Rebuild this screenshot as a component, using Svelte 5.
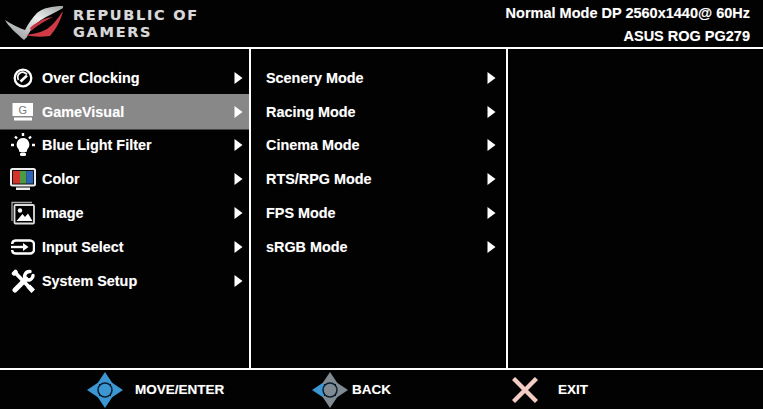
<script>
	const mainItems = ['Over Clocking', 'GameVisual', 'Blue Light Filter', 'Color', 'Image', 'Input Select', 'System Setup'];
	const modes = ['Scenery Mode', 'Racing Mode', 'Cinema Mode', 'RTS/RPG Mode', 'FPS Mode', 'sRGB Mode'];
</script>

{#snippet arrow()}
	<svg class="arrow" width="9" height="12" viewBox="0 0 9 12"><path d="M0.500 0 L8.500 6 L0.500 12 Z" fill="#fff" /></svg>
{/snippet}

{#snippet dpad(left, rest)}
	<svg width="36" height="36" viewBox="0 0 36 36">
		<path d="M0 18 L12 10 L12 26 Z" fill={left} />
		<path d="M18 0 L10 12 L26 12 Z" fill={rest} />
		<path d="M36 18 L24 10 L24 26 Z" fill={rest} />
		<path d="M18 36 L10 24 L26 24 Z" fill={rest} />
		<circle cx="18" cy="18" r="7" fill={rest} stroke="#0a1e30" stroke-width="1.500" />
	</svg>
{/snippet}

<div class="osd">
	<header>
		<div class="brand">
			<svg width="66" height="47" viewBox="0 0 66 47">
				<defs>
					<linearGradient id="blade" x1="0" y1="1" x2="1" y2="0">
						<stop offset="0" stop-color="#8a8e8e" />
						<stop offset="0.600" stop-color="#eceeee" />
						<stop offset="1" stop-color="#a0a4a4" />
					</linearGradient>
				</defs>
				<path d="M63 6 C52 6 43 8 37 13 C32 18 28 24 25 30 C19 28 11 24 5 20 C8 26 16 33 24 40 L27 37 C31 28 38 21 46 17 C52 14 58 11 63 8 Z" fill="url(#blade)" />
				<path d="M63 11 C61 20 56 29 50 36 C42 37 33 37 26 35 C34 34 42 32 47 29 C53 25 58 18 63 11 Z" fill="#d03a44" />
				<path d="M30 28 C36 22 44 18 53 17 C45 21 38 25 31 31 Z" fill="#c23640" />
			</svg>
			<div class="wordmark"><span>REPUBLIC OF</span><span>GAMERS</span></div>
		</div>
		<div class="status">
			<span>Normal Mode DP 2560x1440@ 60Hz</span>
			<span>ASUS ROG PG279</span>
		</div>
	</header>

	<main>
		<ul class="col first">
			{#each mainItems as item, i}
				<li class:active={i === 1}>
					<span class="icon">
						{#if i === 0}
							<svg width="20" height="20" viewBox="0 0 20 20" fill="none" stroke="#fff">
								<circle cx="10" cy="10" r="8.300" stroke-width="2.300" />
								<path d="M5.500 12 A5 5 0 0 1 14 6.500" stroke-width="1.700" />
								<path d="M7.500 13.500 L14 7.500" stroke-width="2.600" />
							</svg>
						{:else if i === 1}
							<svg width="22" height="20" viewBox="0 0 22 20">
								<rect x="0.500" y="1" width="20.500" height="13" fill="#fff" />
								<rect x="2" y="15.500" width="18" height="3" fill="#fff" />
								<text class="g" x="10.700" y="12" text-anchor="middle">G</text>
							</svg>
						{:else if i === 2}
							<svg width="26" height="24" viewBox="0 0 26 24" fill="#fff">
								<path d="M13 5 A6.500 6.500 0 0 1 17.500 16 L16.500 19 L9.500 19 L8.500 16 A6.500 6.500 0 0 1 13 5 Z" />
								<rect x="10" y="19.500" width="6" height="3.500" rx="1.500" />
								<path d="M13 0 V3 M5 3.500 L7 5.500 M21 3.500 L19 5.500 M1 12 H4 M22 12 H25" stroke="#fff" stroke-width="2.400" />
							</svg>
						{:else if i === 3}
							<svg width="26" height="23" viewBox="0 0 26 23">
								<rect x="1" y="1" width="24" height="16.500" rx="1.500" fill="#111" stroke="#eee" stroke-width="2" />
								<rect x="3" y="3" width="7" height="12.500" fill="#d6322c" />
								<rect x="10" y="3" width="6.500" height="12.500" fill="#4d9a45" />
								<rect x="16.500" y="3" width="6.500" height="12.500" fill="#2c62b8" />
								<rect x="6" y="19.500" width="14" height="2.500" fill="#eee" />
							</svg>
						{:else if i === 4}
							<svg width="24" height="24" viewBox="0 0 24 24" fill="none">
								<path d="M1 20 V1.500 H21" stroke="#aaa" stroke-width="1.300" />
								<rect x="3.500" y="4" width="19.500" height="18.500" rx="1" stroke="#ddd" stroke-width="1.800" />
								<circle cx="9" cy="9.500" r="2.200" fill="#fff" />
								<path d="M5.500 20 L11.500 13 L14 16 L17 12.500 L21.500 20 Z" fill="#fff" />
							</svg>
						{:else if i === 5}
							<svg width="24" height="16" viewBox="0 0 24 16" fill="none" stroke="#fff" stroke-width="2.400">
								<path d="M1.200 5 A3.500 3.500 0 0 1 4.500 1.500 H19 A4 4 0 0 1 23 5.500 V10.500 A4 4 0 0 1 19 14.500 H4.500 A3.500 3.500 0 0 1 1.200 11" />
								<path d="M0 8 H15" />
								<path d="M12 4 L17.500 8 L12 12 Z" fill="#fff" stroke="none" />
							</svg>
						{:else}
							<svg width="24" height="24" viewBox="0 0 24 24" fill="none" stroke="#fff" stroke-linecap="round">
								<path d="M4 3.500 L20 20" stroke-width="3.800" />
								<path d="M16.500 18.500 L20.500 23 L23 20.500 L19 16.500 Z" fill="#fff" stroke-width="1.500" />
								<path d="M3 4.500 L4.500 3" stroke-width="4.500" />
								<path d="M4 21 L15 10" stroke-width="5" />
								<path d="M14.500 10 A4.800 4.800 0 0 1 19 2.500 M15 10.500 A4.800 4.800 0 0 0 22 6.500" stroke-width="3.400" />
							</svg>
						{/if}
					</span>
					<span class="label">{item}</span>
					{@render arrow()}
				</li>
			{/each}
		</ul>
		<ul class="col second">
			{#each modes as mode}
				<li><span class="label">{mode}</span>{@render arrow()}</li>
			{/each}
		</ul>
		<div class="col third"></div>
	</main>

	<footer>
		<div class="hint move">
			{@render dpad('#3c96d2', '#3c96d2')}
			<span>MOVE/ENTER</span>
		</div>
		<div class="hint back">
			{@render dpad('#3c96d2', '#7f8a92')}
			<span>BACK</span>
		</div>
		<div class="hint exit">
			<svg width="26" height="26" viewBox="0 0 26 26"><path d="M1.500 1.500 L24.500 24.500 M24.500 1.500 L1.500 24.500" stroke="#f3cdc4" stroke-width="4.400" /></svg>
			<span>EXIT</span>
		</div>
	</footer>
</div>

<style>
	:global(body) {
		margin: 0;
		background: #000;
	}

	.osd {
		width: 763px;
		height: 409px;
		display: flex;
		flex-direction: column;
		background: #020202;
		color: #fff;
		font-family: "Liberation Sans", Arial, sans-serif;
		font-weight: 700;
		text-shadow: 0 0 1px rgba(255, 255, 255, 0.35);
		overflow: hidden;
	}

	header {
		height: 47px;
		flex: none;
		display: flex;
		justify-content: space-between;
		border-bottom: 2px solid #fff;
	}

	.brand {
		display: flex;
		align-items: center;
		gap: 7px;
	}

	.wordmark {
		display: flex;
		flex-direction: column;
		gap: 2px;
		font-family: "DejaVu Sans", sans-serif;
		font-size: 14.500px;
		line-height: 15px;
		letter-spacing: 1.700px;
		color: #d8d8d8;
	}

	.status {
		display: flex;
		flex-direction: column;
		align-items: flex-end;
		gap: 7px;
		padding: 5px 13px 0 0;
		font-size: 14.500px;
		line-height: 16px;
	}

	main {
		flex: 1;
		display: grid;
		grid-template-columns: 251px 257px 1fr;
		min-height: 0;
	}

	.col {
		list-style: none;
		margin: 0;
		padding: 12px 0 0;
	}

	.first,
	.second {
		border-right: 2px solid #fff;
	}

	li {
		height: 33.800px;
		display: flex;
		align-items: center;
		font-size: 14.400px;
	}

	li.active {
		background: #888;
		box-shadow: 0 0 0 1px #888;
		clip-path: inset(-1px 0);
	}

	.icon {
		width: 42px;
		flex: none;
		display: flex;
		justify-content: center;
		padding-left: 4px;
		box-sizing: border-box;
	}

	.g {
		font-size: 11px;
		font-weight: 400;
		fill: #777;
		text-shadow: none;
	}

	.label {
		flex: 1;
	}

	.second .label {
		padding-left: 15px;
	}

	.arrow {
		flex: none;
		margin-right: 6px;
	}

	.second .arrow {
		margin-right: 10px;
	}

	footer {
		height: 39px;
		flex: none;
		border-top: 2px solid #fff;
		display: flex;
		align-items: center;
		font-size: 13.500px;
	}

	.hint {
		display: flex;
		align-items: center;
	}

	.move {
		padding-left: 87px;
		gap: 12px;
		width: 225px;
	}

	.back {
		gap: 4px;
		width: 200px;
	}

	.exit {
		gap: 20px;
	}
</style>
